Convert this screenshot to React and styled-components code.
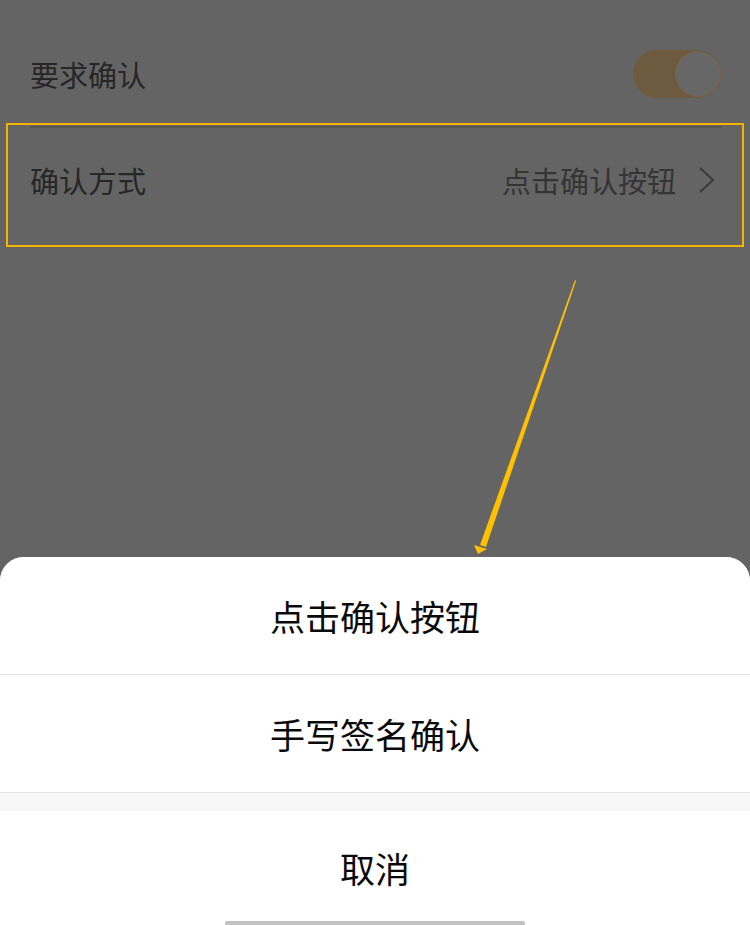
import React from 'react';
import styled, { createGlobalStyle } from 'styled-components';

const GlobalStyle = createGlobalStyle`
	html, body, #root {
		margin: 0;
		height: 100%;
	}
	body {
		font-family: 'Noto Sans CJK SC', 'Noto Sans', sans-serif;
		background: #646464;
	}
`;

const StyledPage = styled.div`
	position: relative;
	width: 750px;
	height: 925px;
	display: flex;
	flex-direction: column;
	background: #646464;
	overflow: hidden;
`;

const StyledList = styled.div`
	display: flex;
	flex-direction: column;
	padding-top: 22px;
`;

const StyledRow = styled.div`
	height: 104px;
	display: flex;
	align-items: center;
	justify-content: space-between;
	padding: 0 30px 0 30px;
	box-sizing: border-box;
`;

const StyledLabel = styled.span`
	font-size: 29px;
	color: ${({ muted }) => (muted ? '#343434' : '#262626')};
	line-height: 1;
`;

const StyledValue = styled.div`
	display: flex;
	align-items: center;
	gap: 22px;
	margin-right: 4px;
`;

const StyledDivider = styled.div`
	height: 2px;
	margin: 0 28px 0 30px;
	background: #575757;
`;

const StyledSwitch = styled.div`
	width: 88px;
	height: 48px;
	border-radius: 24px;
	background: #6e5a3f;
	display: flex;
	justify-content: flex-end;
	align-items: center;
	margin-right: -1px;
`;

const StyledKnob = styled.div`
	width: 44px;
	height: 44px;
	border-radius: 50%;
	background: #676767;
	border: 1px solid #7a6446;
`;

const StyledSheet = styled.div`
	margin-top: auto;
	background: #f7f7f7;
	border-radius: 24px 24px 0 0;
	overflow: hidden;
	display: flex;
	flex-direction: column;
`;

const StyledOption = styled.div`
	height: ${({ h }) => h}px;
	display: flex;
	align-items: center;
	justify-content: center;
	background: #fff;
	font-size: 35px;
	color: #0a0a0a;
	border-bottom: ${({ line }) => (line ? '1px solid #e4e4e4' : 'none')};
	box-sizing: border-box;
`;

const StyledCancel = styled.div`
	margin-top: 18px;
	height: 114px;
	background: #fff;
	display: flex;
	flex-direction: column;
	align-items: center;
	font-size: 35px;
	color: #0a0a0a;
	padding-top: 31px;
	box-sizing: border-box;
`;

const StyledHomeBar = styled.div`
	margin-top: auto;
	width: 300px;
	height: 4px;
	border-radius: 2px 2px 0 0;
	background: #c2c2c2;
`;

const StyledHighlight = styled.div`
	position: absolute;
	left: 6px;
	top: 123px;
	width: 738px;
	height: 124px;
	border: 2px solid #f4b400;
	box-sizing: border-box;
	pointer-events: none;
`;

const StyledArrow = styled.svg`
	position: absolute;
	left: 0;
	top: 0;
	pointer-events: none;
`;

const Chevron = () => (
	<svg width='18' height='28' viewBox='0 0 18 28'>
		<path d='M2 2 L15 14 L2 26' fill='none' stroke='#3a3a3a' strokeWidth='2' />
	</svg>
);

const App = () => {
	return (
		<StyledPage>
			<GlobalStyle />
			<StyledList>
				<StyledRow>
					<StyledLabel>要求确认</StyledLabel>
					<StyledSwitch>
						<StyledKnob />
					</StyledSwitch>
				</StyledRow>
				<StyledDivider />
				<StyledRow>
					<StyledLabel>确认方式</StyledLabel>
					<StyledValue>
						<StyledLabel muted>点击确认按钮</StyledLabel>
						<Chevron />
					</StyledValue>
				</StyledRow>
			</StyledList>
			<StyledSheet>
				<StyledOption h={118} line>
					点击确认按钮
				</StyledOption>
				<StyledOption h={118} line>
					手写签名确认
				</StyledOption>
				<StyledCancel>
					取消
					<StyledHomeBar />
				</StyledCancel>
			</StyledSheet>
			<StyledHighlight />
			<StyledArrow width='750' height='925' viewBox='0 0 750 925'>
				<polygon points='575,280 576,281 486,547 480,545' fill='#ffc000' />
				<polygon points='474,545 487,549 478,554' fill='#ffc000' />
			</StyledArrow>
		</StyledPage>
	);
};

export default App;
